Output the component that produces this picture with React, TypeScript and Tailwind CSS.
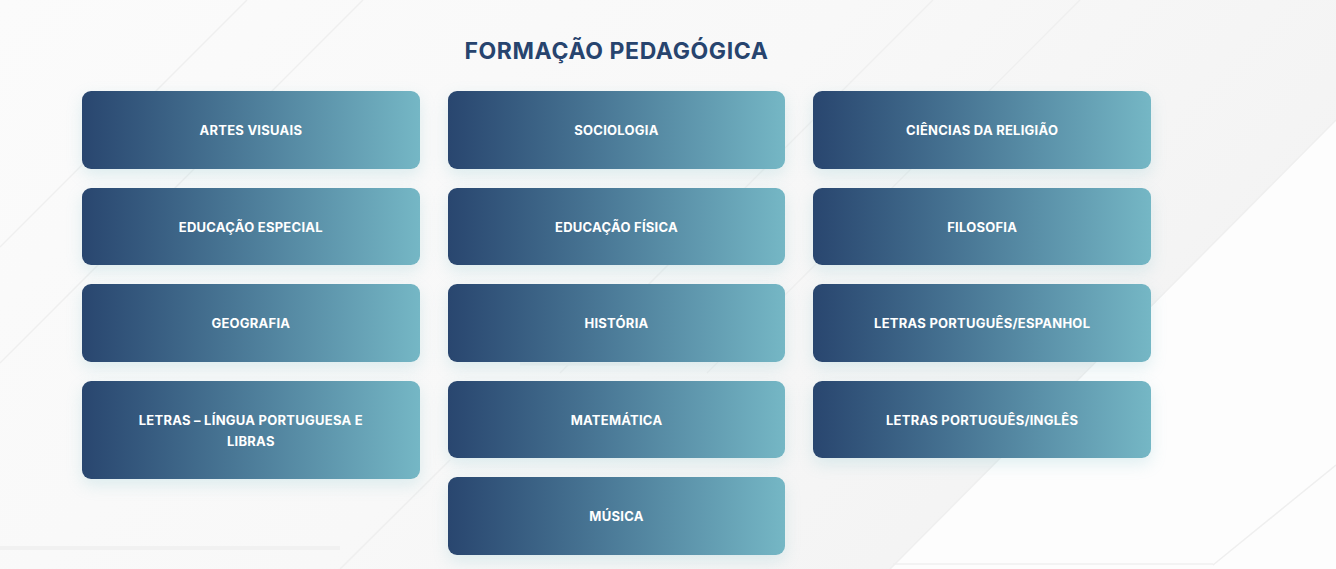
import React from "react";

const cols: string[][] = [
  ["ARTES VISUAIS", "EDUCAÇÃO ESPECIAL", "GEOGRAFIA", "LETRAS – LÍNGUA PORTUGUESA E LIBRAS"],
  ["SOCIOLOGIA", "EDUCAÇÃO FÍSICA", "HISTÓRIA", "MATEMÁTICA", "MÚSICA"],
  ["CIÊNCIAS DA RELIGIÃO", "FILOSOFIA", "LETRAS PORTUGUÊS/ESPANHOL", "LETRAS PORTUGUÊS/INGLÊS"],
];

function Card({ label }: { label: string }) {
  return (
    <div className="rounded-[9px] bg-gradient-to-r from-[#29466f] to-[#75b7c5] pt-[29.25px] pb-[27.25px] px-[48px] text-center text-white text-[13px] leading-[21px] font-bold tracking-[0.25px] shadow-[0_6px_16px_rgba(120,190,200,0.22)]">
      {label}
    </div>
  );
}

export default function App() {
  return (
    <div
      className="relative w-[1336px] h-[569px] overflow-hidden bg-[#f9f9f9]"
      style={{ fontFamily: "Inter, 'Noto Sans', sans-serif" }}
    >
      <svg className="absolute inset-0" width="1336" height="569" viewBox="0 0 1336 569">
        <defs>
          <linearGradient id="bg" x1="0" y1="0" x2="1" y2="0.4">
            <stop offset="0" stopColor="#fbfbfb" />
            <stop offset="0.55" stopColor="#f8f8f8" />
            <stop offset="1" stopColor="#f3f3f3" />
          </linearGradient>
        </defs>
        <rect width="1336" height="569" fill="url(#bg)" />
        <polygon points="1336,120 890,569 1336,569" fill="#fdfdfd" />
        <g stroke="#efefef" strokeWidth="1.5" fill="none">
          <line x1="1336" y1="120" x2="890" y2="569" />
          <line x1="1336" y1="465" x2="1213" y2="565" />
          <line x1="893" y1="564" x2="1213" y2="564" />
          <line x1="933" y1="0" x2="560" y2="373" />
          <line x1="1080" y1="0" x2="707" y2="373" />
          <line x1="247" y1="0" x2="0" y2="247" />
          <line x1="363" y1="0" x2="0" y2="363" />
          <line x1="450" y1="460" x2="340" y2="569" />
        </g>
        <line x1="0" y1="548" x2="340" y2="548" stroke="#f1f1f1" strokeWidth="4" />
        <line x1="520" y1="364" x2="640" y2="364" stroke="#f1f1f1" strokeWidth="3" />
      </svg>
      <div className="relative ml-[82px] w-[1069px] pt-[35px]">
        <h2 className="text-center text-[23px] leading-[32px] font-bold text-[#27446e] tracking-[0.6px]">
          FORMAÇÃO PEDAGÓGICA
        </h2>
        <div className="mt-[24px] grid grid-cols-3 gap-x-[28px] items-start">
          {cols.map((c, i) => (
            <div key={i} className="flex flex-col gap-[19px]">
              {c.map((l) => (
                <Card key={l} label={l} />
              ))}
            </div>
          ))}
        </div>
      </div>
    </div>
  );
}
